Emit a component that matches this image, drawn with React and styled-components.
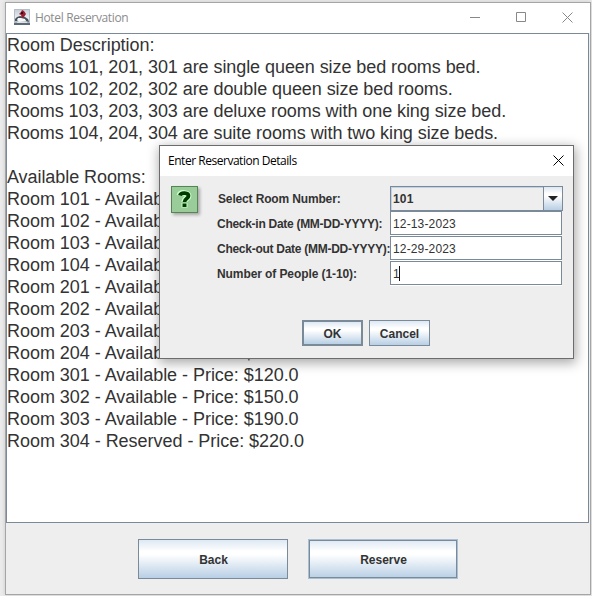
import React from "react";
import styled, { createGlobalStyle, css } from "styled-components";

const Global = createGlobalStyle`
  * { box-sizing: border-box; }
  body { margin: 0; background: #ededed; overflow: hidden; }
`;
const Desktop = styled.div`
  position: relative;
  width: 592px;
  height: 596px;
  padding: 2px 1px 1px 5px;
  background: #ebebeb;
  font-family: "Liberation Sans", Arial, sans-serif;
  color: #333;
`;
const Frame = styled.main`
  display: flex;
  flex-direction: column;
  width: 586px;
  height: 593px;
  background: #eee;
  border: 1px solid #a5a5a5;
  box-shadow: 0 0 4px rgba(0, 0, 0, 0.15);
`;
const TitleBar = styled.header`
  display: flex;
  align-items: center;
  flex: none;
  height: 30px;
  padding: 0 0 2px 8px;
  background: #fff;
  color: ${(p) => (p.$dialog ? "#000" : "#8c8c8c")};
  font-family: "Open Sans", "Noto Sans", sans-serif;
  font-size: 12px;
  white-space: nowrap;
  svg { display: block; flex: none; }
`;
const Caption = styled.span`
  flex: 1;
  letter-spacing: ${(p) => p.$track || 0}px;
  padding-left: ${(p) => p.$gap || 0}px;
`;
const Controls = styled.div`
  display: flex;
  gap: 35px;
  padding-right: ${(p) => p.$right}px;
`;
const TextArea = styled.section`
  flex: none;
  height: 490px;
  margin-right: 1px;
  background: #fff;
  border: 1px solid #7a8a99;
  font-size: 18px;
  line-height: 22px;
  white-space: pre;
`;
const Line = styled.div`
  height: 22px;
  letter-spacing: ${(p) => (p.$listing ? -0.035 : -0.07)}px;
`;
const Actions = styled.footer`
  display: flex;
  justify-content: center;
  gap: 20px;
  padding: 16px 1px 0 0;
`;
const Button = styled.button`
  width: ${(p) => p.$w}px;
  height: ${(p) => p.$h}px;
  padding: 1px 0 0 ${(p) => p.$nudge || 0}px;
  color: #333;
  font: bold 12px "Liberation Sans", Arial, sans-serif;
  border: 1px solid #7a8a99;
  background: linear-gradient(#dde8f3 0, #fff 30%, #fff 38%, #b8cfe5 100%);
  ${(p) =>
    p.$primary &&
    css`
      border-width: 2px;
      border-color: #7a8a99;
    `}
  ${(p) =>
    p.$focus &&
    css`
      border: 1px solid #a9bfd4;
      box-shadow: inset 0 0 0 1px #7a8a99;
    `}
`;
const Dialog = styled.div`
  position: absolute;
  left: 159px;
  top: 145px;
  width: 415px;
  height: 214px;
  display: flex;
  flex-direction: column;
  background: #eee;
  border: 1px solid #6c6c6c;
  box-shadow: 1px 3px 11px 1px rgba(0, 0, 0, 0.34);
`;
const DialogBody = styled.div`
  display: grid;
  grid-template-columns: 46px 1fr;
  padding: 10px 11px 0 11px;
`;
const Form = styled.div`
  display: grid;
  grid-template-columns: 173px 173px;
  grid-template-rows: 25px 25px 25px 25px;
`;
const Label = styled.label`
  padding-left: ${(p) => p.$indent || 0}px;
  font-size: 12px;
  font-weight: bold;
  line-height: 26px;
  white-space: nowrap;
  letter-spacing: ${(p) => p.$track || 0}px;
`;
const Combo = styled.div`
  display: flex;
  height: 25px;
  border: 1px solid #7a8a99;
  box-shadow: inset 1px 1px #c0d3e6;
  font-size: 12px;
  font-weight: bold;
  line-height: 24px;
  letter-spacing: 0.2px;
  padding-left: 2px;
`;
const ComboValue = styled.span`
  flex: 1;
`;
const ComboArrow = styled.span`
  width: 19px;
  padding: 9px 0 0 4px;
  border-left: 1px solid #7a8a99;
  background: linear-gradient(#dde8f3 0, #fff 30%, #fff 38%, #b8cfe5 100%);
  svg { display: block; }
`;
const Field = styled.div`
  display: flex;
  align-items: center;
  width: 172px;
  height: 24px;
  padding: 1px 0 0 2px;
  background: #fff;
  border: 1px solid #7a8a99;
  font-size: 12px;
  letter-spacing: 0.15px;
  box-shadow: 0 1px #fff;
`;
const Caret = styled.i`
  width: 1px;
  height: 15px;
  margin-left: -1px;
  background: #111;
`;
const DialogActions = styled.div`
  display: flex;
  gap: 6px;
  padding: 34px 0 0 142px;
`;
const QuestionBox = styled.div`
  width: 27px;
  height: 27px;
  background: #99cc99;
  border: 1px solid #568456;
  box-shadow: 2px 2px 3px rgba(0, 0, 0, 0.3);
  svg { display: block; }
`;

const QuestionIcon = () => (
  <svg width="25" height="25" fill="none">
    <g stroke="#ccffcc" strokeWidth="6">
      <path d="M7.500 8.500c1-3.500 9-3 9 .5 0 2.500-4 2.500-4 6" />
      <path d="M12.500 16v4.500" />
    </g>
    <path d="M8 8.500c1-3.500 8.500-3 8.500.5 0 2.500-4 2.500-4 6" stroke="#003b00" strokeWidth="3.800" />
    <path d="M12.500 16.500v3.500" stroke="#003b00" strokeWidth="4" />
  </svg>
);
const JavaIcon = () => (
  <svg width="16" height="16" viewBox="0 0 16 16">
    <defs>
      <linearGradient id="sky" x2="0" y2="1">
        <stop stopColor="#c3cdd6" />
        <stop offset=".6" stopColor="#edf0f2" />
        <stop offset="1" stopColor="#7b8b9a" />
      </linearGradient>
    </defs>
    <rect width="16" height="16" fill="url(#sky)" />
    <path d="M.5 15V.5H15.500V15" fill="none" stroke="#b4bdc5" />
    <path d="M1 10 3 8l3-1 5 1 3 2 1 3-3-1-1-1H5l-2 1-2 0z" fill="#46525e" />
    <path d="m4 9 3 0 4 1 1 2-7 1-2-2z" fill="#f8f8f8" />
    <path d="M8 1 10 2l2 3-2 3-2 1-1-3-2-1 2-2z" fill="#9c1c30" />
    <path d="M7 3h2v2H7z" fill="#390b18" />
    <path d="M0 14h16v2H0z" fill="#5c6b7a" />
    <path d="M3 13h10v1H3z" fill="#dce1e6" />
  </svg>
);
const MinimizeIcon = () => (
  <svg width="11" height="11"><path d="M0 5.500h10" stroke="#888" /></svg>
);
const MaximizeIcon = () => (
  <svg width="11" height="11"><path d="M.5.500h9v9h-9z" fill="none" stroke="#888" /></svg>
);
const CloseIcon = ({ color }) => (
  <svg width="11" height="11"><path d="m.5.500 10 10m0-10-10 10" fill="none" stroke={color} /></svg>
);

const lines = [
  "Room Description:",
  "Rooms 101, 201, 301 are single queen size bed rooms bed.",
  "Rooms 102, 202, 302 are double queen size bed rooms.",
  "Rooms 103, 203, 303 are deluxe rooms with one king size bed.",
  "Rooms 104, 204, 304 are suite rooms with two king size beds.",
  "",
  "Available Rooms:",
  "Room 101 - Available - Price: $120.0",
  "Room 102 - Available - Price: $150.0",
  "Room 103 - Available - Price: $190.0",
  "Room 104 - Available - Price: $220.0",
  "Room 201 - Available - Price: $120.0",
  "Room 202 - Available - Price: $150.0",
  "Room 203 - Available - Price: $190.0",
  "Room 204 - Available - Price: $220.0",
  "Room 301 - Available - Price: $120.0",
  "Room 302 - Available - Price: $150.0",
  "Room 303 - Available - Price: $190.0",
  "Room 304 - Reserved - Price: $220.0",
];

export default function App() {
  return (
    <Desktop>
      <Global />
      <Frame>
        <TitleBar>
          <JavaIcon />
          <Caption $gap={5} $track={-0.35}>Hotel Reservation</Caption>
          <Controls $right={17}>
            <MinimizeIcon />
            <MaximizeIcon />
            <CloseIcon color="#888" />
          </Controls>
        </TitleBar>
        <TextArea>
          {lines.map((line, i) => (
            <Line key={i} $listing={line.startsWith("Room ")}>{line}</Line>
          ))}
        </TextArea>
        <Actions>
          <Button $w={150} $h={40} $nudge={2}>Back</Button>
          <Button $w={150} $h={40} $nudge={2} $focus>Reserve</Button>
        </Actions>
      </Frame>
      <Dialog>
        <TitleBar $dialog>
          <Caption $track={-0.47}>Enter Reservation Details</Caption>
          <Controls $right={9}><CloseIcon color="#000" /></Controls>
        </TitleBar>
        <DialogBody>
          <QuestionBox><QuestionIcon /></QuestionBox>
          <Form>
            <Label $indent={1} $track={-0.15}>Select Room Number:</Label>
            <Combo>
              <ComboValue>101</ComboValue>
              <ComboArrow>
                <svg width="10" height="5"><path d="M0 0h10L5 5z" fill="#222" /></svg>
              </ComboArrow>
            </Combo>
            <Label $track={-0.28}>Check-in Date (MM-DD-YYYY):</Label>
            <Field>12-13-2023</Field>
            <Label $track={-0.27}>Check-out Date (MM-DD-YYYY):</Label>
            <Field>12-29-2023</Field>
            <Label $track={-0.09}>Number of People (1-10):</Label>
            <Field>1<Caret /></Field>
          </Form>
        </DialogBody>
        <DialogActions>
          <Button $w={61} $h={26} $primary>OK</Button>
          <Button $w={61} $h={26}>Cancel</Button>
        </DialogActions>
      </Dialog>
    </Desktop>
  );
}
